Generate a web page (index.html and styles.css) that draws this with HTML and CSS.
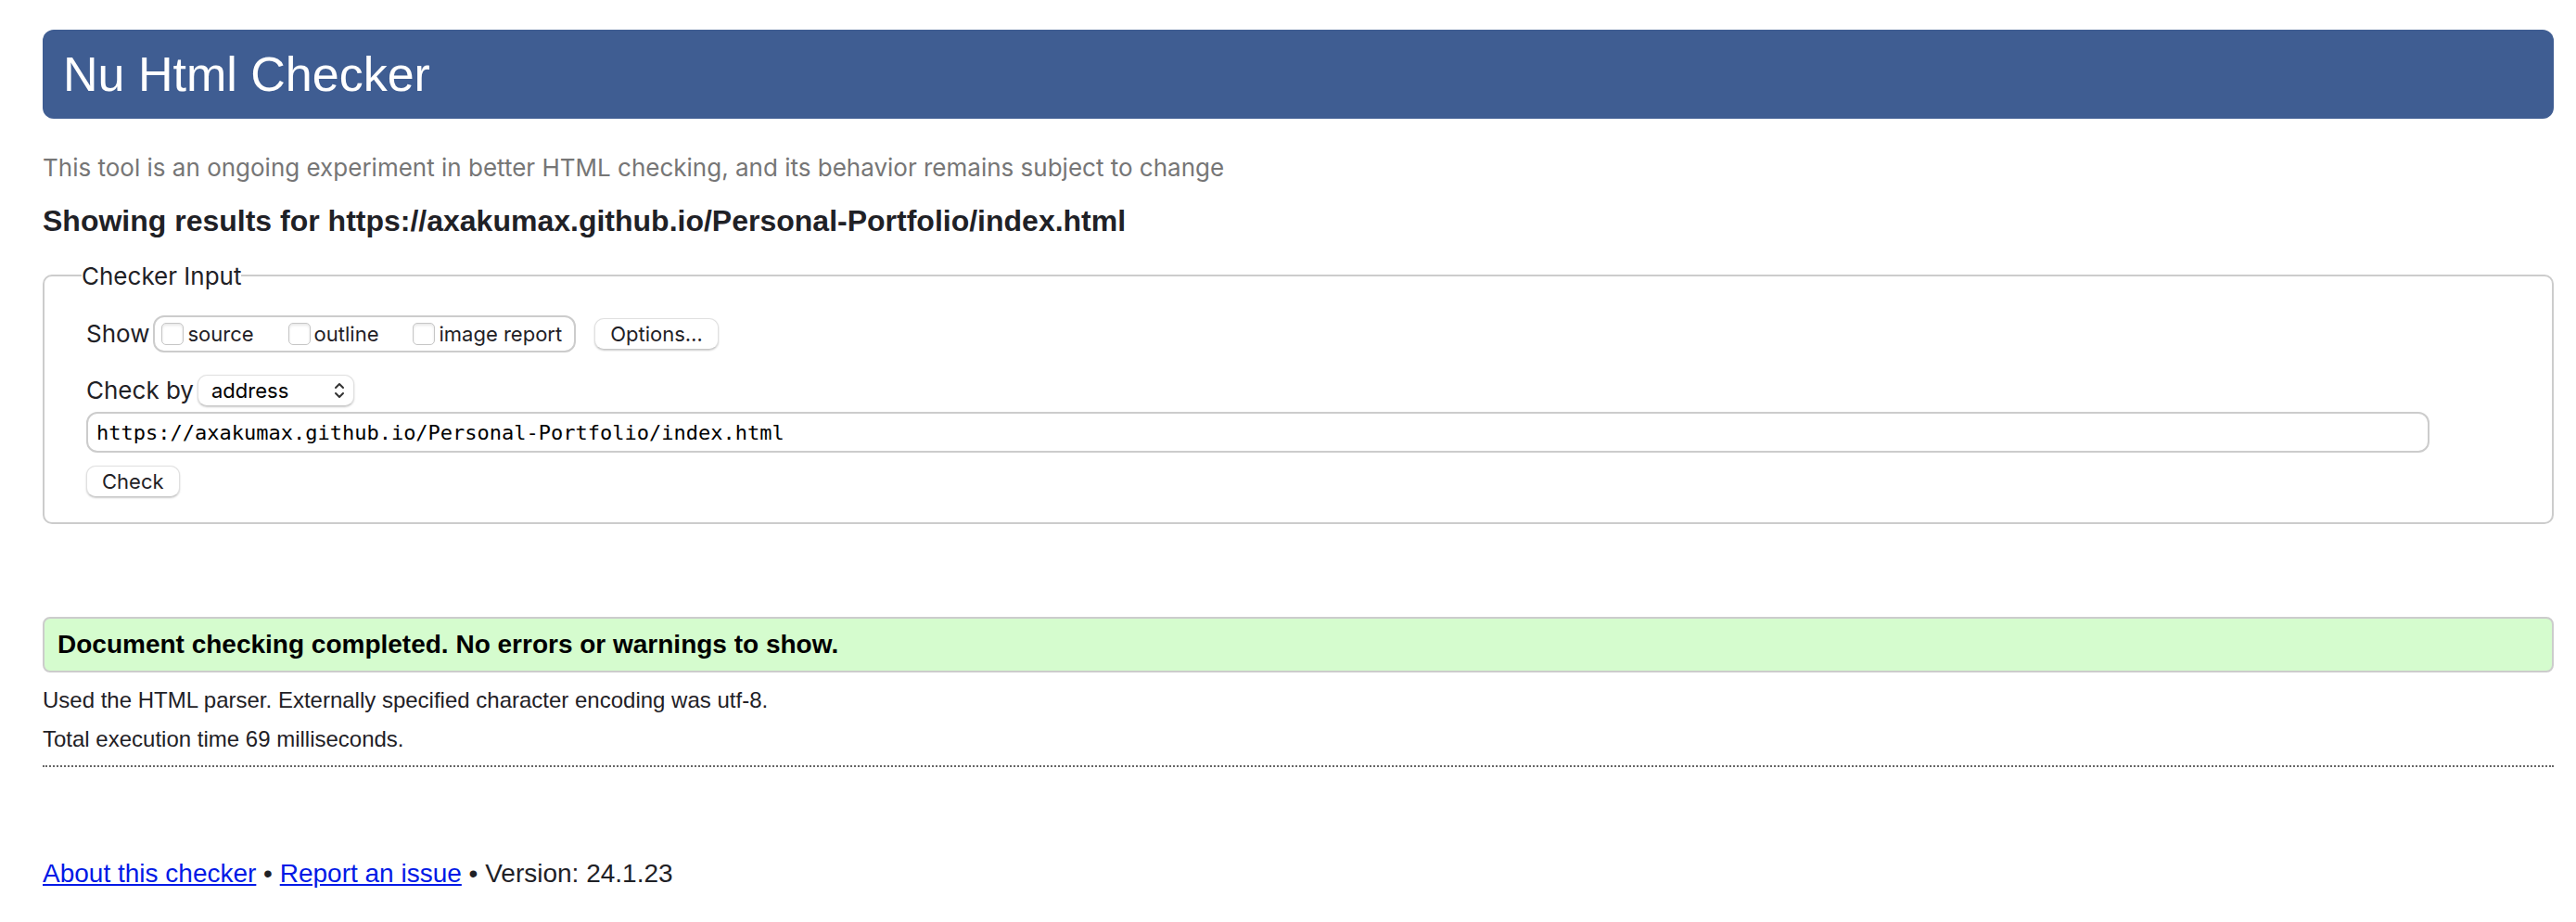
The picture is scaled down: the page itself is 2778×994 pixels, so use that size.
FILE: index.html
```html
<!DOCTYPE html>
<html lang="en">
<head>
<meta charset="utf-8">
<title>Showing results for https://axakumax.github.io/Personal-Portfolio/index.html</title>
<link rel="stylesheet" href="styles.css">
</head>
<body>
<header>
  <h1 class="banner">Nu Html Checker</h1>
  <p class="tagline">This tool is an ongoing experiment in better HTML checking, and its behavior remains subject to change</p>
</header>
<main>
  <h2 class="heading">Showing results for https://axakumax.github.io/Personal-Portfolio/index.html</h2>
  <form>
    <fieldset class="checker">
      <legend class="legend">Checker Input</legend>
      <div class="row show-row">
        <span>Show</span>
        <div class="checks">
          <label class="check"><input type="checkbox" class="box">source</label>
          <label class="check"><input type="checkbox" class="box">outline</label>
          <label class="check"><input type="checkbox" class="box">image report</label>
        </div>
        <button type="button" class="button options">Options…</button>
      </div>
      <div class="row">
        <label for="method">Check by</label>
        <div class="picker">
          <select id="method" class="button select"><option>address</option></select>
          <svg class="arrows" viewBox="0 0 12 18" aria-hidden="true"><path d="M2 6l4-4 4 4M2 12l4 4 4-4"/></svg>
        </div>
      </div>
      <input class="address" type="text" aria-label="Address" spellcheck="false" value="https://axakumax.github.io/Personal-Portfolio/index.html">
      <button type="button" class="button submit">Check</button>
    </fieldset>
  </form>
  <section class="results">
    <p class="success">Document checking completed. No errors or warnings to show.</p>
    <p class="detail">Used the HTML parser. Externally specified character encoding was utf-8.</p>
    <p class="detail">Total execution time 69 milliseconds.</p>
  </section>
</main>
<footer class="footer"><a href="#about">About this checker</a> • <a href="#issue">Report an issue</a> • Version: 24.1.23</footer>
</body>
</html>
```

FILE: styles.css
```css
* {
  box-sizing: border-box;
}

body {
  margin: 32px 24px 24px 46px;
  background: #fff;
  color: #1f2126;
  font-family: "Liberation Sans", Arial, sans-serif;
}

.banner {
  margin: 0;
  padding: 18px 22px;
  border-radius: 12px;
  background: #3f5d92;
  color: #fff;
  font-size: 52px;
  font-weight: 400;
  line-height: 60px;
}

.tagline {
  margin: 37px 0 0;
  color: #767676;
  font-family: Inter, sans-serif;
  font-size: 26px;
  line-height: 32px;
}

.heading {
  margin: 23px 0 0;
  font-size: 32px;
  line-height: 36px;
}

.checker {
  margin: 24px 0 0;
  padding: 26px 54px 27px 45px;
  border: 2px solid #ccc;
  border-radius: 10px;
  font-family: Inter, sans-serif;
  font-size: 26px;
}

.legend {
  margin-left: -5px;
  padding: 2px 0 0;
  line-height: 32px;
}

.row {
  display: flex;
  align-items: center;
  gap: 4px;
  line-height: 32px;
}

.show-row {
  margin-bottom: 24px;
}

.checks {
  display: flex;
  gap: 37px;
  height: 40px;
  padding: 0 13px 0 7px;
  border: 2px solid #ccc;
  border-radius: 12px;
}

.check {
  display: flex;
  align-items: center;
  gap: 4px;
  font-size: 22px;
}

.box {
  appearance: none;
  width: 24px;
  height: 24px;
  margin: 0;
  border: 1px solid #c6c6c6;
  border-radius: 5px;
  background: #fff;
  box-shadow: inset 0 2px 3px #e8e8e8;
}

.button {
  height: 34px;
  padding: 0 16px;
  border: 1px solid #e0e0e0;
  border-bottom-color: #c8c8c8;
  border-radius: 10px;
  background: #fff;
  box-shadow: 0 1px 2px #ccc;
  color: #1f2126;
  font-family: Inter, sans-serif;
  font-size: 22px;
  line-height: 30px;
}

.options {
  margin-left: 16px;
}

.picker {
  display: grid;
  align-items: center;
}

.select {
  grid-area: 1 / 1;
  appearance: none;
  width: 169px;
  padding: 0 14px;
  color: #000;
}

.arrows {
  grid-area: 1 / 1;
  justify-self: end;
  width: 12px;
  height: 18px;
  margin-right: 10px;
  fill: none;
  stroke: #333;
  stroke-width: 2;
  stroke-linecap: round;
  stroke-linejoin: round;
  pointer-events: none;
}

.address {
  display: block;
  width: 97%;
  height: 44px;
  margin: 6px 0 14px;
  padding: 0 9px;
  border: 2px solid #ccc;
  border-radius: 12px;
  background: #fff;
  color: #000;
  font-family: "DejaVu Sans Mono", monospace;
  font-size: 22px;
}

.results {
  margin-top: 100px;
  padding-bottom: 7px;
  border-bottom: 2px dotted #666;
}

.success {
  margin: 0 0 9px;
  padding: 12px 14px;
  border: 2px solid #ccc;
  border-radius: 8px;
  background: #d5fcce;
  color: #000;
  font-size: 28px;
  font-weight: 700;
  line-height: 32px;
}

.detail {
  margin: 0;
  font-size: 24px;
  line-height: 42px;
}

.footer {
  margin-top: 99px;
  font-size: 28px;
  line-height: 32px;
}

.footer a {
  color: #0019e6;
}
```
